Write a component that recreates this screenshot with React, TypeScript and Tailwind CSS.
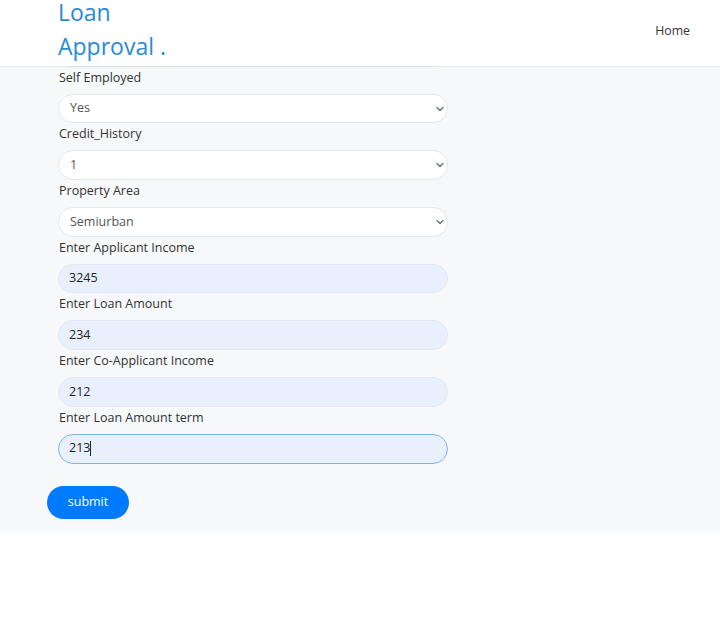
import React from 'react'

const font = { fontFamily: '"Open Sans", "Noto Sans", sans-serif' }

function Chevron() {
  return (
    <svg width="8" height="6" viewBox="0 0 8 6" className="text-gray-500">
      <path d="M1 1.5 L4 4.5 L7 1.5" fill="none" stroke="currentColor" strokeWidth="1.4" strokeLinecap="round" strokeLinejoin="round" />
    </svg>
  )
}

function SelectField({ label, value }: { label: string; value: string }) {
  return (
    <div>
      <div className="h-5 leading-5 pt-px text-[12.5px] text-[#333] pl-[1px] mb-[7px]">{label}</div>
      <div className="h-[29.7px] w-[390px] rounded-full bg-white border border-[#e4e7eb] flex items-center justify-between pl-[11px] pr-[3px]">
        <span className="text-[12.5px] text-[#555]">{value}</span>
        <Chevron />
      </div>
    </div>
  )
}

function InputField({ label, value, focused }: { label: string; value: string; focused?: boolean }) {
  return (
    <div>
      <div className="h-5 leading-5 pt-px text-[12.5px] text-[#333] pl-[1px] mb-[7px]">{label}</div>
      <div
        className={
          focused
            ? 'h-[29.7px] w-[390px] rounded-full bg-[#e8f0fe] border border-[#7fb4e6] flex items-center pl-[10px]'
            : 'h-[29.7px] w-[390px] rounded-full bg-[#e8f0fe] border border-[#e2e8f2] flex items-center pl-[10px]'
        }
      >
        <span className="text-[12.5px] text-[#222]">{value}</span>
        {focused && <span className="w-px h-[15px] bg-[#222]" />}
      </div>
    </div>
  )
}

export default function App() {
  return (
    <div className="w-[720px] h-[626px] bg-white relative overflow-hidden" style={font}>
      {/* Navbar */}
      <div className="absolute top-0 left-0 right-0 h-[66px] bg-white z-10 shadow-[0_1px_2px_rgba(0,0,0,0.06)] flex justify-between">
        <div className="pl-[58px] text-[23px] text-[#2a8ad4]">
          <div className="leading-[24px]">Loan</div>
          <div className="leading-[34px] mt-[5px]">Approval .</div>
        </div>
        <div className="pr-[30px] pt-[22px] text-[12.3px] text-[#333]">Home</div>
      </div>

      {/* Form section */}
      <div className="bg-[#f7f8fa] h-[533px] pt-[37px] pl-[58px]">
        <div className="h-[29.7px] w-[390px] rounded-full bg-white border border-[#e4e7eb]" />
        <SelectField label="Self Employed" value="Yes" />
        <SelectField label="Credit_History" value="1" />
        <SelectField label="Property Area" value="Semiurban" />
        <InputField label="Enter Applicant Income" value="3245" />
        <InputField label="Enter Loan Amount" value="234" />
        <InputField label="Enter Co-Applicant Income" value="212" />
        <InputField label="Enter Loan Amount term" value="213" focused />
        <button className="mt-[22px] -ml-[11px] h-[33px] w-[82px] rounded-full bg-[#007bff] text-white text-[12.5px]">
          submit
        </button>
      </div>
    </div>
  )
}
